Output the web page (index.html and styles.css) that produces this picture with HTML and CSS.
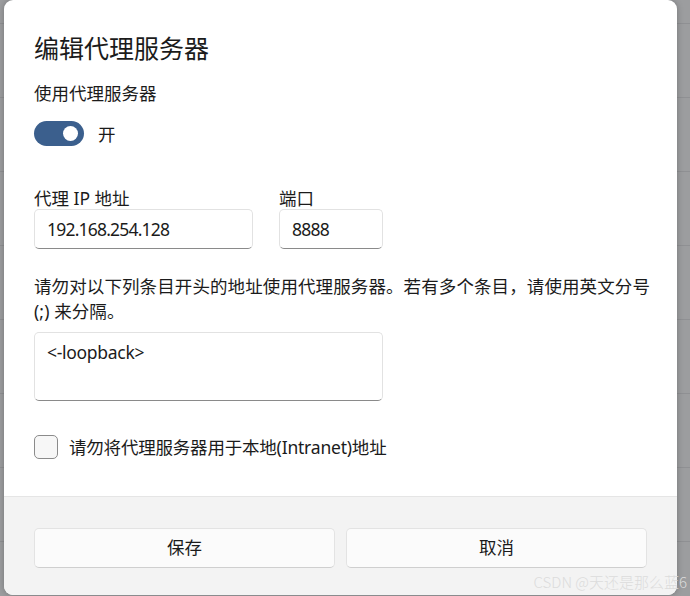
FILE: index.html
```html
<!DOCTYPE html>
<html lang="zh-CN">
<head>
    <meta charset="UTF-8">
    <meta name="viewport" content="width=device-width, initial-scale=1.0">
    <title>编辑代理服务器</title>
    <link rel="stylesheet" href="styles.css">
</head>
<body>
    <div class="backdrop">
        <div class="dialog">
            <div class="dialog-body">
                <h1>编辑代理服务器</h1>
                <div class="label">使用代理服务器</div>
                <div class="toggle-row">
                    <span class="toggle"><span class="knob"></span></span>
                    <span class="toggle-text">开</span>
                </div>
                <div class="fields">
                    <div class="field">
                        <div class="label">代理 IP 地址</div>
                        <div class="input ip">192.168.254.128</div>
                    </div>
                    <div class="field">
                        <div class="label">端口</div>
                        <div class="input port">8888</div>
                    </div>
                </div>
                <p class="desc">请勿对以下列条目开头的地址使用代理服务器。若有多个条目，请使用英文分号 (;) 来分隔。</p>
                <div class="input textarea">&lt;-loopback&gt;</div>
                <div class="check-row">
                    <span class="checkbox"></span>
                    <span>请勿将代理服务器用于本地(Intranet)地址</span>
                </div>
            </div>
            <div class="dialog-footer">
                <button class="btn">保存</button>
                <button class="btn">取消</button>
            </div>
        </div>
        <div class="watermark">CSDN @天还是那么蓝6</div>
    </div>
</body>
</html>
```
FILE: styles.css
```css
body {
    margin: 0;
    padding: 0;
    font-family: "Noto Sans", "Noto Sans CJK SC", sans-serif;
    color: #1b1b1b;
}
.backdrop {
    position: relative;
    width: 690px;
    height: 596px;
    overflow: hidden;
    background-color: #9c9d9f;
    background-image: linear-gradient(#8f9093 1px, transparent 1px);
    background-size: 100% 74px;
    background-position: 0 23px;
}
.dialog {
    margin-left: 4px;
    width: 673px;
    height: 595px;
    background: #fff;
    border-radius: 9px;
    overflow: hidden;
    display: flex;
    flex-direction: column;
    box-shadow: 0 0 6px rgba(0, 0, 0, 0.25);
}
.dialog-body {
    flex: 1;
    padding: 31px 30px 0 30px;
}
h1 {
    margin: 0;
    font-size: 25px;
    font-weight: 400;
    line-height: 34px;
}
.label {
    font-size: 17.5px;
    line-height: 24px;
}
h1 + .label {
    margin-top: 16px;
}
.toggle-row {
    display: flex;
    align-items: center;
    gap: 14px;
    margin-top: 16px;
    font-size: 17.5px;
}
.toggle {
    width: 50px;
    height: 25px;
    border-radius: 13px;
    background: #3b5f8d;
    display: flex;
    align-items: center;
    justify-content: flex-end;
    padding-right: 6px;
    box-sizing: border-box;
}
.knob {
    width: 15px;
    height: 15px;
    border-radius: 50%;
    background: #fff;
}
.fields {
    display: flex;
    gap: 26px;
    margin-top: 41px;
}
.field .label {
    line-height: 22px;
}
.input {
    box-sizing: border-box;
    height: 40px;
    border: 1px solid #e2e2e2;
    border-bottom: 1px solid #8a8a8a;
    border-radius: 5px;
    padding: 0 12px;
    font-size: 17.5px;
    letter-spacing: -0.8px;
    line-height: 38px;
    background: #fff;
}
.ip {
    width: 219px;
}
.port {
    width: 104px;
}
.desc {
    margin: 25px -15px 0 0;
    font-size: 17.5px;
    letter-spacing: 0.1px;
    line-height: 25px;
}
.textarea {
    margin-top: 8px;
    width: 349px;
    height: 69px;
    line-height: 38px;
    letter-spacing: -0.3px;
}
.check-row {
    display: flex;
    align-items: center;
    gap: 11px;
    margin-top: 33px;
    font-size: 17.5px;
    letter-spacing: -0.2px;
}
.checkbox {
    width: 22px;
    height: 22px;
    border: 1px solid #8b8b8b;
    border-radius: 5px;
    background: #f7f7f7;
}
.dialog-footer {
    height: 99px;
    border-top: 1px solid #e5e5e5;
    background: #f3f3f3;
    display: flex;
    gap: 11px;
    padding: 31px 30px 0 30px;
    box-sizing: border-box;
}
.btn {
    flex: 1;
    height: 40px;
    padding: 0 0 3px 0;
    border: 1px solid #e3e3e3;
    border-bottom-color: #cfcfcf;
    border-radius: 5px;
    background: #fbfbfb;
    font-family: "Noto Sans", "Noto Sans CJK SC", sans-serif;
    font-size: 17.5px;
    color: #1b1b1b;
}
.watermark {
    position: absolute;
    right: 3px;
    bottom: 4px;
    font-family: "Noto Sans CJK SC", sans-serif;
    font-size: 15px;
    font-weight: 300;
    color: #dcdcdc;
}
```
